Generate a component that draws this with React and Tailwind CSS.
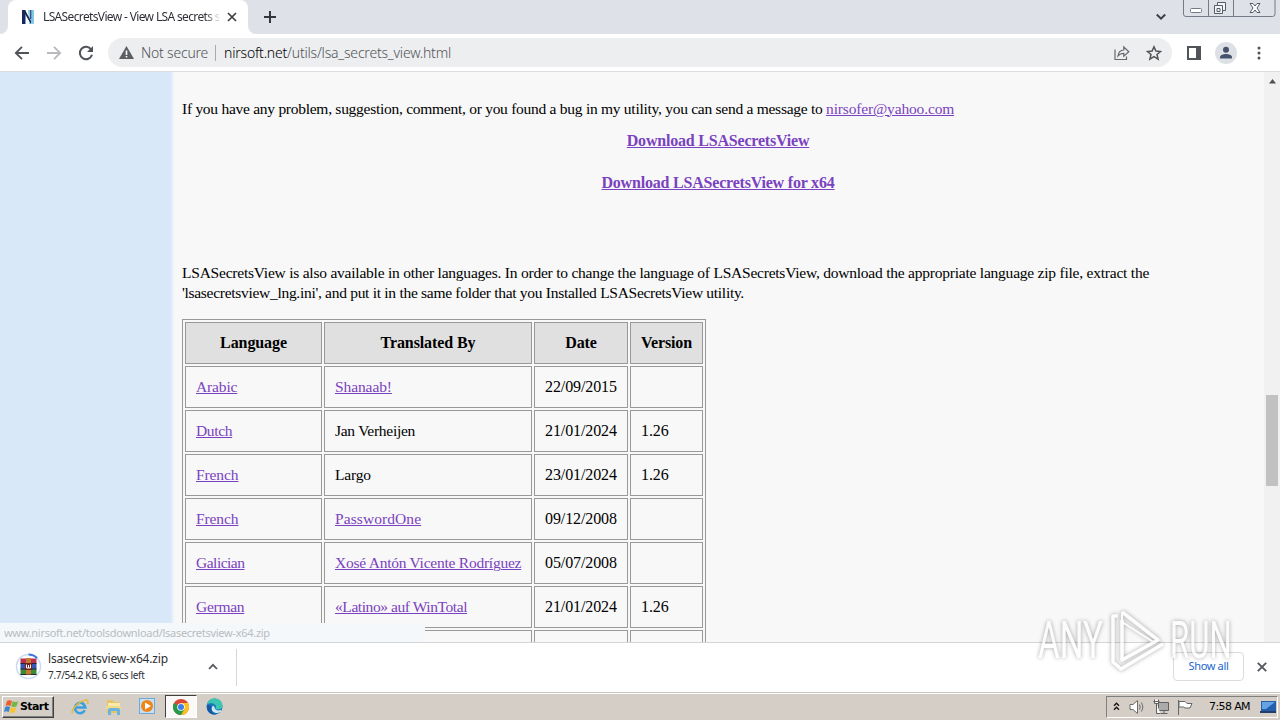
import React from "react";

const link = "text-[#7a42c0] underline underline-offset-1 decoration-1";

const rows = [
  ["Arabic", "tracking-[-0.15px]", "Shanaab!", "tracking-[-0.1px]", true, "22/09/2015", ""],
  ["Dutch", "tracking-[-0.35px]", "Jan Verheijen", "tracking-[-0.28px]", false, "21/01/2024", "1.26"],
  ["French", "tracking-[-0.1px]", "Largo", "tracking-[-0.2px]", false, "23/01/2024", "1.26"],
  ["French", "tracking-[-0.1px]", "PasswordOne", "tracking-[0.08px]", true, "09/12/2008", ""],
  ["Galician", "tracking-[-0.5px]", "Xosé Antón Vicente Rodríguez", "tracking-[-0.24px]", true, "05/07/2008", ""],
  ["German", "tracking-[-0.27px]", "«Latino» auf WinTotal", "tracking-[-0.42px]", true, "21/01/2024", "1.26"],
  ["", "", "", "", false, "", ""],
];

function TabBar() {
  return (
    <div className="flex h-[34px] shrink-0 bg-[#dee1e8] pl-2">
      <div className="relative flex w-[240px] items-center rounded-t-lg bg-white pl-3">
        <div className="absolute -left-2 bottom-0 h-2 w-2 bg-white">
          <div className="h-2 w-2 rounded-br-lg bg-[#dee1e8]" />
        </div>
        <div className="absolute -right-2 bottom-0 h-2 w-2 bg-white">
          <div className="h-2 w-2 rounded-bl-lg bg-[#dee1e8]" />
        </div>
        <svg className="h-4 w-4 shrink-0" viewBox="0 0 16 16">
          <path d="M8 1h6v14H9z" fill="#8fd0e6" />
          <path d="M2 1h4v14H2z" fill="#6f9fd0" />
          <path d="M2 15V1h3l6 11v3L5 5v10z" fill="#1c2458" />
          <path d="M11 1h2.500v13H11z" fill="#7cc6e4" />
          <path d="M10 1h1.300v9H10z" fill="#3c4f88" />
        </svg>
        <span className="ml-[7px] w-[176px] bg-linear-to-r from-[#2b2d33] from-92% to-[#2b2d33]/20 to-99% bg-clip-text whitespace-nowrap font-['Noto_Sans',sans-serif] text-[12px] tracking-[-0.64px] text-transparent">
          LSASecretsView - View LSA secrets s
        </span>
        <svg className="ml-2 h-[10px] w-[10px] shrink-0" viewBox="0 0 10 10" stroke="#3c4043" strokeWidth="1.7">
          <path d="M1 1l8 8M9 1L1 9" />
        </svg>
      </div>
      <svg className="mt-[11px] ml-4 h-3 w-3" viewBox="0 0 12 12" stroke="#33363b" strokeWidth="2">
        <path d="M6 0v12M0 6h12" />
      </svg>
      <div className="flex-1" />
      <svg className="mt-[13px] mr-[17px] h-2 w-[10px]" viewBox="0 0 10 8" fill="none" stroke="#3c4043" strokeWidth="2">
        <path d="M.8 1.500L5 5.700l4.200-4.200" />
      </svg>
      <svg className="mr-[4px] h-[18px] w-[93px]" viewBox="0 0 93 18" fill="none" stroke="#747b87">
        <path d="M.5 0v14q0 2.500 2.500 2.500h86.500q2.500 0 2.500-2.500V0M25.500 0v16M50.500 0v16" />
        <rect x="7.500" y="8.500" width="11" height="4" rx="1" fill="#fff" />
        <path d="M34.500 2.500h8v8h-3v3h-8v-8h3z" fill="#f4f5f8" stroke="#555b66" />
        <path d="M34.500 5.500h5v5M34 8.500h3v3h-3z" stroke="#555b66" />
        <path d="M67 3.500h3l2 2.500 2-2.500h3L74 8l3 4.500h-3L72 10l-2 2.500h-3L70 8z" fill="#fff" stroke="#555b66" />
      </svg>
    </div>
  );
}

function Toolbar() {
  return (
    <div className="flex h-[38px] shrink-0 items-center border-b border-[#dcdcdf] bg-white pl-[14px] font-['Noto_Sans',sans-serif] text-[14px]">
      <svg className="h-4 w-4" viewBox="0 0 16 16" fill="none" stroke="#505357" strokeWidth="1.800">
        <path d="M15 8H2M8 1.800L1.800 8 8 14.200" />
      </svg>
      <svg className="ml-4 h-4 w-4" viewBox="0 0 16 16" fill="none" stroke="#b8babd" strokeWidth="1.800">
        <path d="M1 8h13M8 1.800L14.200 8 8 14.200" />
      </svg>
      <svg className="ml-4 h-4 w-4" viewBox="0 0 16 16">
        <path d="M13.200 4.500A6.200 6.200 0 1 0 14 9.800" fill="none" stroke="#505357" strokeWidth="2" />
        <path d="M15 1v6H9z" fill="#505357" />
      </svg>
      <div className="ml-[14px] flex h-[29px] w-[1064px] items-center rounded-full bg-[#edeef0] pl-[11px]">
        <svg className="h-[13px] w-[15px]" viewBox="0 0 15 13">
          <path d="M7.500 0L15 13H0z" fill="#5b5e62" />
          <path d="M6.700 4.500h1.600V9H6.700zM6.700 10h1.600v1.500H6.700z" fill="#fff" />
        </svg>
        <span className="ml-[7px] w-[74px] whitespace-nowrap font-light tracking-[-0.2px] text-[#505357]">Not secure</span>
        <div className="h-4 w-px bg-[#a8abaf]" />
        <span className="ml-2 whitespace-nowrap font-light tracking-[-0.2px] text-[#505357]">
          <span className="text-black">nirsoft.net</span>/utils/lsa_secrets_view.html
        </span>
        <div className="flex-1" />
        <svg className="mr-4 h-4 w-4" viewBox="0 0 16 16" fill="none" stroke="#66696e" strokeWidth="1.200">
          <path d="M1 4.500v10h11.500v-3" />
          <path d="M4 11c.4-4 2.500-5.800 5.800-6V2l5 4.700-5 4.500V8.300C7.500 8.300 5.500 9 4 11z" />
        </svg>
        <svg className="mr-[10px] h-4 w-4" viewBox="0 0 16 16" fill="none" stroke="#505357" strokeWidth="1.500">
          <path d="M8 1.800l1.900 4.300 4.600.4L11 9.500l1.100 4.600L8 11.700l-4.100 2.400L5 9.500 1.500 6.500l4.600-.4z" />
        </svg>
      </div>
      <svg className="ml-[15px] h-[14px] w-[14px]" viewBox="0 0 14 14">
        <path d="M0 0h14v14H0zM2 2v10h7V2z" fill="#505357" fillRule="evenodd" />
      </svg>
      <svg className="ml-[14px] h-[22px] w-[22px]" viewBox="0 0 22 22" fill="#46516d">
        <circle cx="11" cy="11" r="11" fill="#dde0e5" />
        <circle cx="11" cy="7.800" r="3" />
        <path d="M5 16.500v-1.200C5 13 8.500 12 11 12s6 1 6 3.300v1.200z" />
      </svg>
      <svg className="ml-[20px] h-[14px] w-1" viewBox="0 0 4 14" fill="#505357">
        <circle cx="2" cy="2" r="1.500" /><circle cx="2" cy="7" r="1.500" /><circle cx="2" cy="12" r="1.500" />
      </svg>
    </div>
  );
}

const head = "flex items-center justify-center border border-[#999] bg-[#e0e0e0] font-bold text-[16px] tracking-[-0.1px]";
const cell = "flex items-center border border-[#999] px-[10px] whitespace-nowrap";

function Page() {
  return (
    <div className="relative flex h-[570px] shrink-0 overflow-hidden bg-[#f8f8f8] font-['Liberation_Serif',serif] text-[15.5px] leading-5 text-black">
      <div className="w-[174px] shrink-0 bg-linear-to-r from-[#d8e8f9] from-98% to-[#f1f6fb]" />
      <div className="w-[1090px] shrink-0 pt-[27px] pl-2">
        <p className="whitespace-nowrap tracking-[-0.27px]">
          If you have any problem, suggestion, comment, or you found a bug in my utility, you can send a message to{" "}
          <span className={link + " tracking-[-0.16px]"}>nirsofer@yahoo.com</span>
        </p>
        <div className="mt-3 flex w-[1072px] flex-col items-center gap-[22px] text-[16px] font-bold tracking-[-0.2px]">
          <span className={link}>Download LSASecretsView</span>
          <span className={link}>Download LSASecretsView for x64</span>
        </div>
        <p className="mt-[70px] whitespace-nowrap tracking-[-0.226px]">
          LSASecretsView is also available in other languages. In order to change the language of LSASecretsView, download the appropriate language zip file, extract the
          <br />
          <span className="tracking-[-0.29px]">'lsasecretsview_lng.ini', and put it in the same folder that you Installed LSASecretsView utility.</span>
        </p>
        <div className="mt-4 grid w-[524px] auto-rows-[42px] grid-cols-[137px_208px_94px_73px] gap-[2px] border border-[#999] p-[2px]">
          <div className={head}>Language</div>
          <div className={head}>Translated By</div>
          <div className={head}>Date</div>
          <div className={head}>Version</div>
          {rows.map((r, i) => (
            <React.Fragment key={i}>
              <div className={cell}><span className={link + " " + r[1]}>{r[0]}</span></div>
              <div className={cell}><span className={(r[4] ? link : "") + " " + r[3]}>{r[2]}</span></div>
              <div className={cell + " text-[16px] tracking-[-0.1px]"}>{r[5]}</div>
              <div className={cell + " text-[16px] tracking-[-0.1px]"}>{r[6]}</div>
            </React.Fragment>
          ))}
        </div>
      </div>
      <div className="flex w-4 shrink-0 flex-col items-center bg-[#f1f1f1]">
        <svg className="mt-[7px] h-[5px] w-[7px]" viewBox="0 0 7 5"><path d="M3.500 0L7 4.500H0z" fill="#505050" /></svg>
        <div className="mt-[311px] h-[91px] w-3 bg-[#c1c1c1]" />
      </div>
      <div className="absolute bottom-0 left-0 flex h-[19px] w-[425px] items-center bg-[#f4f8fb] pl-1 font-['Noto_Sans',sans-serif] text-[11px] text-[#b9bcc0]">
        <span className="tracking-[-0.28px]">www.nirsoft.net/toolsdownload/lsasecretsview-x64.zip</span>
      </div>
    </div>
  );
}

function Downloads() {
  return (
    <div className="flex h-[50px] shrink-0 border-t border-[#d5d5d8] bg-white font-['Noto_Sans',sans-serif]">
      <svg className="mt-[10px] ml-[15px] h-[27px] w-[27px]" viewBox="0 0 27 27">
        <circle cx="13.500" cy="13.500" r="12" fill="none" stroke="#cbd9f3" strokeWidth="1.500" />
        <path d="M13.500 1.500a12 12 0 0 1 8.500 3.500" fill="none" stroke="#3b73dc" strokeWidth="2" />
        <path d="M5.500 5.500h16v5h-16z" fill="#b8304e" />
        <path d="M5.500 10.500h16v5.500h-16z" fill="#3558b8" />
        <path d="M5.500 16h16v5.500h-16z" fill="#3b8a38" />
        <path d="M5.500 10.500h16M5.500 16h16M5.500 21.500h16" stroke="#282333" />
        <path d="M11 5h5v16.500h-5z" fill="#c8792f" />
        <path d="M10 10h7v7h-7z" fill="#6e241c" />
        <path d="M11.500 11.500v3.500h4v-3.500M13.500 12v3" fill="none" stroke="#fff" />
      </svg>
      <div className="mt-[8px] ml-[6px] w-[159px] whitespace-nowrap text-[#2d2f33]">
        <div className="text-[12px] leading-4 tracking-[-0.18px]">lsasecretsview-x64.zip</div>
        <div className="text-[10px] leading-4 tracking-[-0.33px]">7.7/54.2 KB, 6 secs left</div>
      </div>
      <svg className="mt-[20px] ml-[1px] h-[7px] w-[10px]" viewBox="0 0 10 7" fill="none" stroke="#55585c" strokeWidth="1.800">
        <path d="M1 6l4-4.200L9 6" />
      </svg>
      <div className="mt-[6px] ml-[18px] h-[37px] w-px bg-[#d4d6d9]" />
      <div className="flex-1" />
      <div className="mt-[9px] flex h-[29px] w-[71px] items-center justify-center rounded-[4px] border border-[#dadce0] text-[11px] tracking-[-0.35px] text-[#1a66cc]">Show all</div>
      <svg className="mt-[19px] mr-[13px] ml-[13px] h-[10px] w-[10px]" viewBox="0 0 10 10" stroke="#55585c" strokeWidth="1.900">
        <path d="M.8.8l8.400 8.400M9.200.8L.8 9.200" />
      </svg>
    </div>
  );
}

function Taskbar() {
  return (
    <div className="flex h-[28px] shrink-0 items-center border-t border-[#c9c6c0] bg-[#d5cec7] shadow-[inset_0_1px_0_#fff]">
      <div className="ml-[2px] flex h-[22px] w-[52px] items-center border border-t-white border-r-[#404040] border-b-[#404040] border-l-white pl-[1px] font-['DejaVu_Sans',sans-serif] text-[11px] font-bold tracking-[-0.6px] text-black shadow-[inset_-1px_-1px_0_#808080]">
        <svg className="mr-[1px] h-[15px] w-[15px] shrink-0" viewBox="0 0 15 15">
          <path d="M3 2q2-1.500 5 0L6.500 7q-3-1.300-5 0z" fill="#ee5b2c" />
          <path d="M8.700 2.300q3 1.500 5.500 0L12.600 7.300q-3 1.400-5.400 0z" fill="#74b843" />
          <path d="M1.200 8q2-1.300 5 0L4.700 13q-2.500-1.300-4.700 0z" fill="#3b86d1" />
          <path d="M7 8.300q3 1.400 5.300 0l-1.500 5q-3 1.400-5.300 0z" fill="#f8c52e" />
        </svg>
        <span className="pt-[2px]">Start</span>
      </div>
      <svg className="ml-[17px] h-[18px] w-[18px]" viewBox="0 0 18 18" fill="none">
        <path d="M13.800 12.300A5.200 5.200 0 1 1 14.300 9.500H4.500" stroke="#3aa0e0" strokeWidth="2.600" />
        <path d="M1.500 15.500C-.5 12 8 3 15 2q3 0 1.500 4" stroke="#e6b93c" strokeWidth="1.500" />
      </svg>
      <svg className="ml-4 h-[18px] w-[18px]" viewBox="0 0 18 18">
        <path d="M2 2h6l1 2h6v11H2z" fill="#e6c565" />
        <path d="M3 5h12v5H3z" fill="#f8e9ac" />
        <path d="M1 8h15v3H1z" fill="#f2d988" />
        <path d="M3 17v-5q0-2 2-2h8q2 0 2 2v5h-3v-4H6v4z" fill="#69b5df" />
      </svg>
      <svg className="ml-4 h-[17px] w-[17px]" viewBox="0 0 17 17">
        <rect x=".5" y=".5" width="15" height="15" fill="#c5dff3" stroke="#6daad9" />
        <circle cx="8" cy="8" r="6" fill="#f08416" />
        <path d="M6 4.500v7L12 8z" fill="#fff" />
      </svg>
      <div className="ml-[9px] flex h-[23px] w-8 items-center justify-center border border-t-[#404040] border-r-white border-b-white border-l-[#404040] bg-[#faf9f8]">
        <svg className="h-4 w-4" viewBox="0 0 16 16">
          <circle cx="8" cy="8" r="8" fill="#de4433" />
          <path d="M8 8L1.070 4A8 8 0 0 0 8 16l4-6z" fill="#289a4c" />
          <path d="M8 16a8 8 0 0 0 6.930-12H8l3.500 6z" fill="#fbc21b" />
          <circle cx="8" cy="8" r="3.800" fill="#fff" />
          <circle cx="8" cy="8" r="3" fill="#3f7de8" />
        </svg>
      </div>
      <svg className="ml-[9px] h-[17px] w-[17px]" viewBox="0 0 17 17">
        <circle cx="8.500" cy="8.500" r="8" fill="#1676bd" />
        <path d="M1 6.500C2 2.500 5 .5 8.500.5c5 0 8 3.500 8 7 0 3-2.500 4-5 4-2 0-2.500-1-1.500-2.500C10.500 6 5 3.500 1 6.500z" fill="#3cc6b1" />
        <path d="M7 7.500c-3 3-.5 7.500 3.500 7.500 2 0 3.500-.5 5-2l-.8-1c-3 1-6.200 0-6.200-3z" fill="#d4e6ee" />
        <path d="M5.500 8c-1.500 4 1 8 5 8.300-7 1.500-11-5-9-9.300z" fill="#1657a1" />
      </svg>
      <div className="flex-1" />
      <div className="mr-[2px] flex h-[22px] w-[172px] items-center border border-t-[#808080] border-r-white border-b-white border-l-[#808080] font-['DejaVu_Sans',sans-serif] text-[11px] text-black">
        <svg className="ml-[6px] h-[9px] w-[7px]" viewBox="0 0 7 9" fill="none" stroke="#111" strokeWidth="1.300">
          <path d="M1 3.700L3.500 1.200 6 3.700M1 7.700l2.500-2.500L6 7.700" />
        </svg>
        <svg className="ml-[9px] h-4 w-4" viewBox="0 0 16 16" fill="none" stroke="#6d6d6d">
          <path d="M1 5.500h3L8.500 1.500v13L4 10.500H1z" fill="#fff" />
          <path d="M10.500 5.500q1.500 2.500 0 5M12.500 3.500q3 4.500 0 9" />
        </svg>
        <svg className="ml-[8px] h-4 w-4" viewBox="0 0 16 16" fill="none" stroke="#606060">
          <path d="M5.500 3.500h10v8h-10z" fill="#aaa" />
          <path d="M7.500 14.500h7M11 11.500v3" />
          <path d="M1.500.5v4h4v-4M3.500 4.500v10h4M.5 2.500h6" fill="#f8f8f8" />
        </svg>
        <svg className="ml-[8px] h-4 w-4" viewBox="0 0 16 16" fill="#fff" stroke="#666">
          <path d="M1.500 1v15M2 2.500h6l2 2h5l-2 4.500H8L6.500 8H2z" />
        </svg>
        <span className="ml-[16px] w-[42px] pt-[2px] whitespace-nowrap tracking-[-0.6px]">7:58 AM</span>
        <svg className="ml-[9px] h-4 w-[16px]" viewBox="0 0 16 16">
          <path d="M1 2h15v10H1z" fill="#245fae" />
          <path d="M2 3h13L6 10H2z" fill="#65a4e2" />
          <path d="M0 12h16v2H0z" fill="#233e69" />
        </svg>
      </div>
    </div>
  );
}

function Watermark() {
  return (
    <div className="absolute top-[608px] left-[1038px] flex h-[66px] w-[196px] items-center opacity-70 drop-shadow-[0_0_2px_rgba(0,0,0,0.5)]">
      <span className="w-[70px] shrink-0 origin-left scale-x-[0.64] font-['Roboto',sans-serif] text-[52px] leading-none text-white">ANY</span>
      <svg className="h-[66px] w-[60px] shrink-0" viewBox="0 0 60 66" fill="none" stroke="#fff" strokeWidth="4" strokeLinejoin="round">
        <path d="M14 12v40L50 32L14 4" strokeWidth="3.500" />
        <path d="M14 4v10L47 35" strokeWidth="2" />
        <path d="M10 8H5v46l8 7 42-25" strokeWidth="3.500" />
      </svg>
      <span className="ml-[2px] origin-left scale-x-[0.6] font-['Roboto',sans-serif] text-[52px] leading-none text-white">RUN</span>
    </div>
  );
}

export default function App() {
  return (
    <div className="relative flex h-[720px] w-[1280px] flex-col overflow-hidden bg-white">
      <TabBar />
      <Toolbar />
      <Page />
      <Downloads />
      <Taskbar />
      <Watermark />
    </div>
  );
}
